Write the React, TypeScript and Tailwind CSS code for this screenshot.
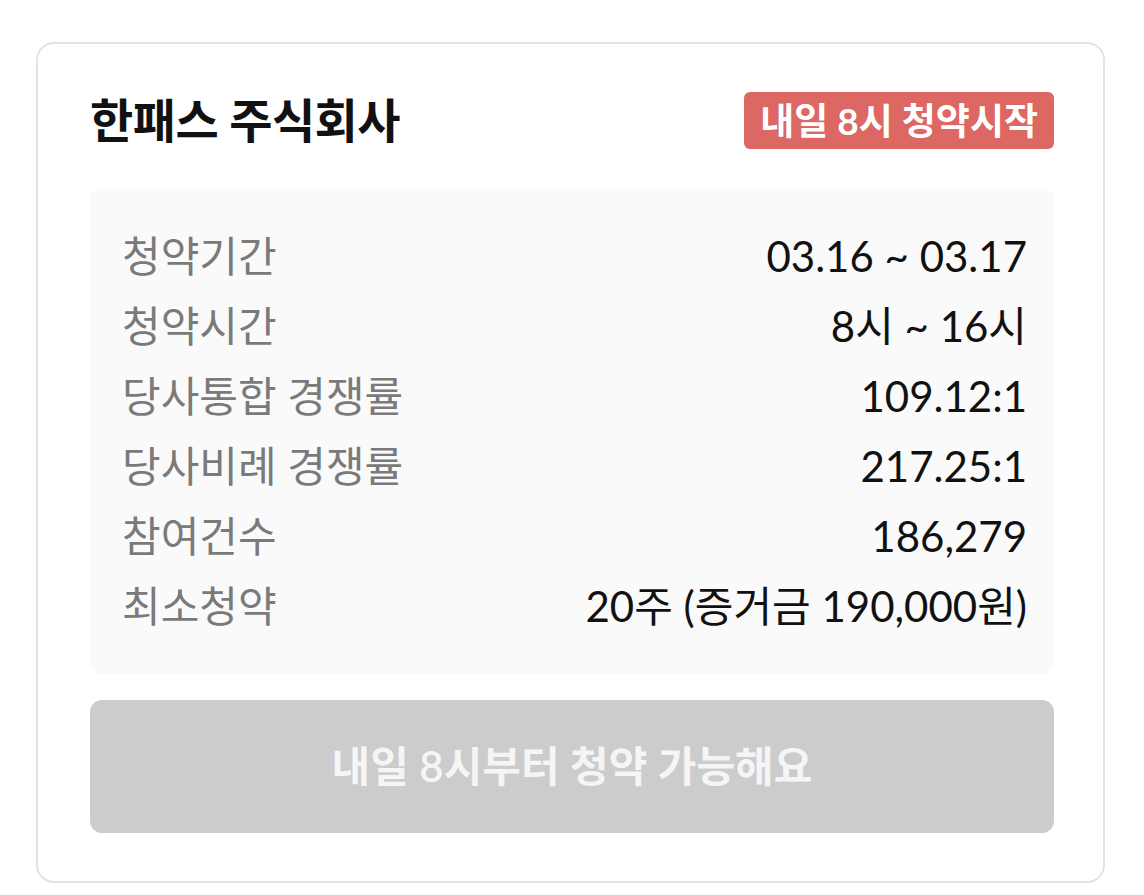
const rows = [
  { label: '청약기간', value: '03.16 ~ 03.17' },
  { label: '청약시간', value: '8시 ~ 16시' },
  { label: '당사통합 경쟁률', value: '109.12:1' },
  { label: '당사비례 경쟁률', value: '217.25:1' },
  { label: '참여건수', value: '186,279' },
  { label: '최소청약', value: '20주 (증거금 190,000원)' },
];

export default function App() {
  return (
    <div className="min-h-[895px] w-[1144px] bg-white pl-[36px] pt-[42px] font-['Lato','Noto_Sans_CJK_KR',sans-serif]">
      <div className="w-[1069px] rounded-[18px] border-2 border-[#e3e3e3] pl-[52px] pr-[49px] pt-[48px] pb-[48px]">
        <div className="flex h-[57px] items-center justify-between">
          <h1 className="text-[47px] font-bold tracking-[-0.5px] text-[#111]">한패스 주식회사</h1>
          <span className="flex h-[57px] items-center rounded-[6px] bg-[#dd6763] px-[16px] text-[37px] font-bold text-white">
            내일 8시 청약시작
          </span>
        </div>

        <div className="mt-[39px] rounded-[12px] bg-[#fafafa] py-[33px] pl-[32px] pr-[27px]">
          {rows.map((r) => (
            <div key={r.label} className="flex h-[70px] items-center justify-between text-[42px]">
              <span className="text-[#7a7a7a]">{r.label}</span>
              <span className="text-[#111]">{r.value}</span>
            </div>
          ))}
        </div>

        <button className="mt-[26px] flex h-[133px] w-full items-center justify-center rounded-[12px] bg-[#cccccc] text-[42px] font-semibold text-[#f5f5f5]">
          내일 8시부터 청약 가능해요
        </button>
      </div>
    </div>
  );
}
